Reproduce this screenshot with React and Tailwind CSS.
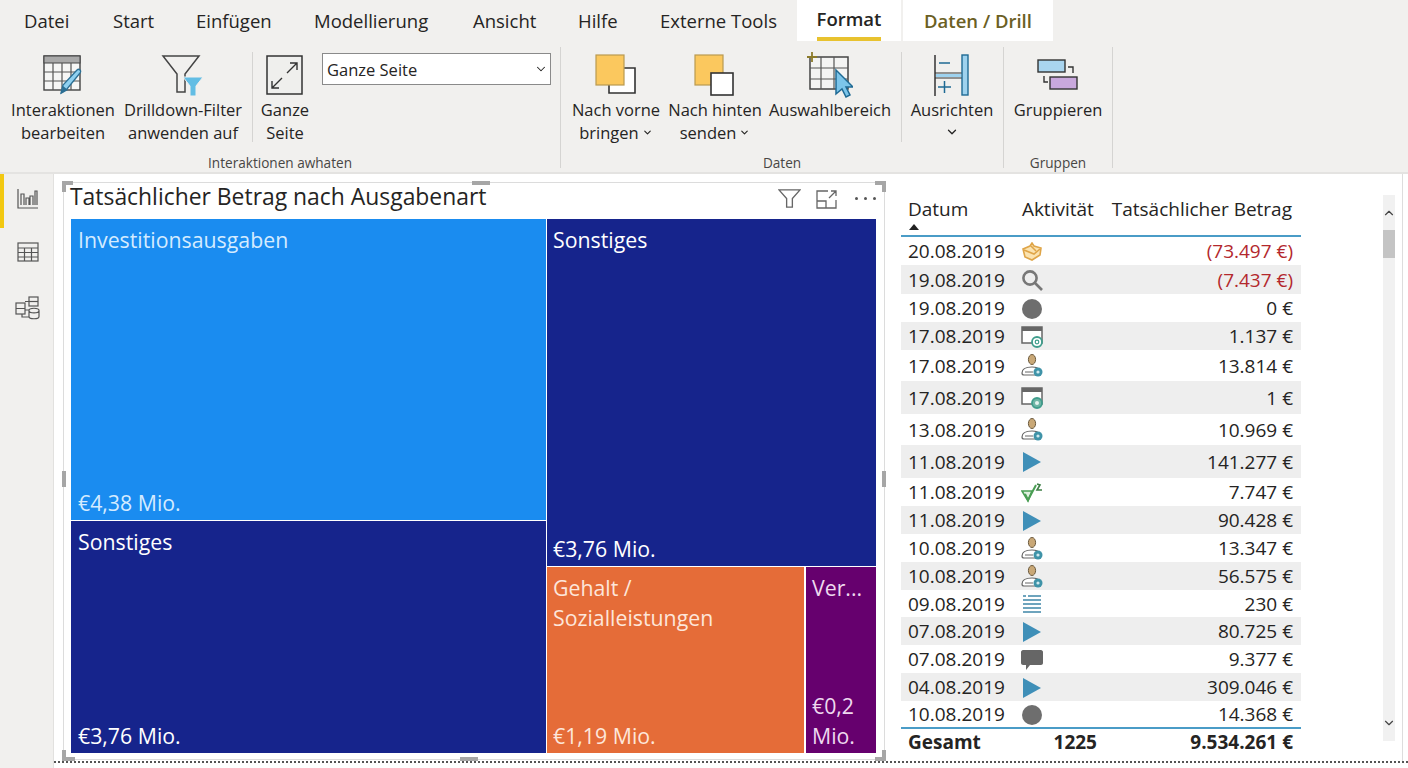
import { ChevronDown, ChevronUp } from "lucide-react";

const tabs = [
  { label: "Datei", cls: "w-[89px]" },
  { label: "Start", cls: "w-[83px]" },
  { label: "Einfügen", cls: "w-[118px]" },
  { label: "Modellierung", cls: "w-[159px]" },
  { label: "Ansicht", cls: "w-[105px]" },
  { label: "Hilfe", cls: "w-[82px]" },
  { label: "Externe Tools", cls: "w-[137px]" },
];

function InteractionIcon() {
  return (
    <svg width="44" height="44" viewBox="0 0 44 44" fill="none">
      <rect x="3" y="3" width="36" height="34" fill="#f6f6f5" stroke="#444" strokeWidth="1.4" />
      <rect x="3" y="3" width="36" height="7" fill="#a9a9a9" stroke="#444" strokeWidth="1" />
      <path d="M3 19h36M3 28h36M12 10v27M21 10v27M30 10v27" stroke="#555" strokeWidth="1.2" />
      <path d="M20 40l2-8 14-15c2-2 5 1 3 3L26 36z" fill="#8fd0f0" stroke="#2c6f94" strokeWidth="1.3" />
      <path d="M20 41l2-8 5 4z" fill="#2c6f94" />
    </svg>
  );
}

function DrillIcon() {
  return (
    <svg width="44" height="42" viewBox="0 0 44 42" fill="none">
      <path d="M2 2h36L24 20v18h-8V20z" fill="#f1f0ee" stroke="#444" strokeWidth="1.5" />
      <path d="M22 23h20l-7 9v10h-6V32z" fill="#62bde4" stroke="#f1f0ee" strokeWidth="1" />
    </svg>
  );
}

function FitIcon() {
  return (
    <svg width="38" height="40" viewBox="0 0 38 40" fill="none">
      <rect x="1" y="1" width="35" height="38" fill="#efefed" stroke="#333" strokeWidth="1.5" />
      <path d="M21 18L31 8M24 8h7v7M16 23L6 33M6 26v7h7" stroke="#333" strokeWidth="1.4" />
    </svg>
  );
}

function ForwardIcon() {
  return (
    <svg width="42" height="42" viewBox="0 0 42 42" fill="none">
      <path d="M27 14h13v25H14V29" fill="#fff" stroke="#333" strokeWidth="1.6" />
      <rect x="1" y="1" width="28" height="30" fill="#fbc85e" stroke="#b99a50" strokeWidth="1.2" />
    </svg>
  );
}

function BackwardIcon() {
  return (
    <svg width="42" height="42" viewBox="0 0 42 42" fill="none">
      <rect x="1" y="1" width="28" height="30" fill="#fbc85e" stroke="#b99a50" strokeWidth="1.2" />
      <rect x="17" y="19" width="22" height="22" fill="#fff" stroke="#333" strokeWidth="1.6" />
    </svg>
  );
}

function SelectionIcon() {
  return (
    <svg width="46" height="46" viewBox="0 0 46 46" fill="none">
      <rect x="3" y="5" width="38" height="32" fill="#f4f4f3" stroke="#444" strokeWidth="1.5" />
      <path d="M3 16h38M3 27h38M14 5v32M27 5v32" stroke="#555" strokeWidth="1.2" />
      <path d="M5 0v10M0 5h10" stroke="#8c7b2a" strokeWidth="1.8" />
      <path d="M29 18v24l6-5 4 8 4-2-4-8h7z" fill="#7cc5ea" stroke="#1f6a94" strokeWidth="1.5" />
    </svg>
  );
}

function AlignIcon() {
  return (
    <svg width="38" height="42" viewBox="0 0 38 42" fill="none">
      <path d="M2 1v41" stroke="#333" strokeWidth="1.5" />
      <path d="M6 9h11M5 33h13M11.5 27v12" stroke="#1f6a94" strokeWidth="1.5" />
      <path d="M2 19h27M2 24h27" stroke="#333" strokeWidth="1.2" />
      <rect x="3" y="20" width="25" height="3" fill="#9ed2ee" />
      <rect x="29" y="1" width="6" height="40" fill="#9ed2ee" stroke="#1f6a94" strokeWidth="1.4" />
    </svg>
  );
}

function GroupIcon() {
  return (
    <svg width="42" height="32" viewBox="0 0 42 32" fill="none">
      <rect x="1" y="1" width="27" height="12" fill="#a9d5ef" stroke="#333" strokeWidth="1.4" />
      <rect x="13" y="18" width="27" height="12" fill="#c9a8dd" stroke="#333" strokeWidth="1.4" />
      <path d="M31 8h5v6M7 17v6h4" stroke="#333" strokeWidth="1.4" />
    </svg>
  );
}

function RibbonButton({ width, icon, children }) {
  return (
    <div className={`flex flex-col items-center shrink-0 ${width}`}>
      <div className="h-[46px] flex items-center justify-center">{icon}</div>
      <div className="text-[16.5px] leading-[23px] text-center text-[#252423] whitespace-nowrap">{children}</div>
    </div>
  );
}

function Ribbon() {
  return (
    <div className="h-[172px] bg-[#f1f0ee]">
      <div className="h-[41px] flex">
        {tabs.map((t) => (
          <div key={t.label} className={`${t.cls} first:ml-[24px] text-[18.5px] leading-[41px] text-[#252423]`}>
            {t.label}
          </div>
        ))}
        <div className="w-[104px] bg-white flex flex-col items-center">
          <div className="text-[18.5px] leading-[37px] h-[37px] font-semibold text-[#252423]">Format</div>
          <div className="w-[64px] h-[4px] bg-[#e8c22f]" />
        </div>
        <div className="ml-[2px] w-[150px] bg-white text-center text-[18.5px] leading-[41px] font-semibold text-[#6b6024]">
          Daten / Drill
        </div>
      </div>

      <div className="flex mt-[6px]">
        <div className="w-[561px] h-[121px] border-r border-[#d5d4d2] pt-[5px] flex-none">
          <div className="flex h-[95px] pl-[8px]">
            <RibbonButton width="w-[110px]" icon={<InteractionIcon />}>
              Interaktionen<br />bearbeiten
            </RibbonButton>
            <RibbonButton width="w-[130px]" icon={<DrillIcon />}>
              Drilldown-Filter<br />anwenden auf
            </RibbonButton>
            <div className="ml-[4px] w-px h-[90px] bg-[#d5d4d2]" />
            <RibbonButton width="w-[64px]" icon={<FitIcon />}>
              Ganze<br />Seite
            </RibbonButton>
            <div className="ml-[5px] mt-[1px] w-[229px] h-[32px] bg-white border border-[#8a8a8a] flex items-center justify-between pl-[4px] pr-[2px] text-[16.5px] text-[#252423]">
              <span className="pt-[2px]">Ganze Seite</span>
              <ChevronDown size={14} strokeWidth={1.8} />
            </div>
          </div>
          <div className="mt-[8px] text-center text-[13.6px] leading-[16px] text-[#484644]">Interaktionen awhaten</div>
        </div>

        <div className="w-[443px] h-[121px] border-r border-[#d5d4d2] pt-[5px] flex-none">
          <div className="flex h-[95px]">
            <RibbonButton width="w-[110px]" icon={<ForwardIcon />}>
              Nach vorne<br />
              <span className="inline-flex items-center gap-[3px]">bringen <ChevronDown size={11} strokeWidth={2.5} /></span>
            </RibbonButton>
            <RibbonButton width="w-[88px]" icon={<BackwardIcon />}>
              Nach hinten<br />
              <span className="inline-flex items-center gap-[3px]">senden <ChevronDown size={11} strokeWidth={2.5} /></span>
            </RibbonButton>
            <RibbonButton width="w-[142px]" icon={<SelectionIcon />}>
              Auswahlbereich
            </RibbonButton>
            <div className="w-px h-[90px] bg-[#d5d4d2]" />
            <RibbonButton width="w-[100px]" icon={<AlignIcon />}>
              Ausrichten<br />
              <span className="inline-flex items-center"><ChevronDown size={14} strokeWidth={2.2} /></span>
            </RibbonButton>
          </div>
          <div className="mt-[8px] text-center text-[13.6px] leading-[16px] text-[#484644]">Daten</div>
        </div>

        <div className="w-[109px] h-[121px] border-r border-[#d5d4d2] pt-[5px] flex-none">
          <div className="flex h-[95px]">
            <RibbonButton width="w-[108px]" icon={<GroupIcon />}>
              Gruppieren
            </RibbonButton>
          </div>
          <div className="mt-[8px] text-center text-[13.6px] leading-[16px] text-[#484644]">Gruppen</div>
        </div>
      </div>
    </div>
  );
}

function Rail() {
  return (
    <div className="w-[54px] flex-none bg-[#f1f0ee] border-r border-[#e2e1df] flex">
      <div className="w-[4px] h-[54px] bg-[#f2c811] flex-none" />
      <div className="flex flex-col items-center w-[48px] pt-[15px]">
        <svg width="22" height="20" viewBox="0 0 22 20" fill="none" stroke="#555" strokeWidth="1.2">
          <path d="M1 0v19h20" />
          <path d="M4 16V5h3v11M9 16V9h3v7M13 16V7h3v9M18 16V2h2v14" />
        </svg>
        <svg className="mt-[33px]" width="22" height="20" viewBox="0 0 22 20" fill="none" stroke="#555" strokeWidth="1.2">
          <rect x="1" y="1" width="20" height="18" />
          <path d="M1 6h20M1 10.5h20M1 15h20M7.5 6v13M14.5 6v13" />
        </svg>
        <svg className="mt-[34px]" width="26" height="24" viewBox="0 0 26 24" fill="none" stroke="#555" strokeWidth="1.2">
          <rect x="14" y="1" width="9" height="9" />
          <path d="M14 5.5h9" />
          <rect x="1" y="7" width="9" height="11" />
          <path d="M1 12.5h9M10 5.5h4M10 14h4M7 18v3h7" />
          <path d="M14 14.5c0-3 10-3 10 0v6c0 3-10 3-10 0zM14 15c1 2.5 9 2.5 10 0" />
        </svg>
      </div>
    </div>
  );
}

function Tile({ bg, label, value, cls, text = "text-white", pad = "pl-[7px]" }) {
  return (
    <div className={`${bg} ${cls} ${text} ${pad} flex flex-col justify-between pt-[6px] pb-[2px] text-[21.3px] leading-[30px]`}>
      <div>{label}</div>
      <div>{value}</div>
    </div>
  );
}

function Handle({ cls }) {
  return <div className={`absolute bg-[#a6a6a6] ${cls}`} />;
}

function Visual() {
  return (
    <div className="relative w-[822px] h-[578px] mt-[8px] ml-[9px] flex-none border border-[#dcdcdc] flex flex-col">
      <Handle cls="left-[-2px] top-[-2px] w-[11px] h-[4px]" />
      <Handle cls="left-[-2px] top-[-2px] w-[4px] h-[11px]" />
      <Handle cls="right-[-2px] top-[-2px] w-[11px] h-[4px]" />
      <Handle cls="right-[-2px] top-[-2px] w-[4px] h-[11px]" />
      <Handle cls="left-[-2px] bottom-[-2px] w-[13px] h-[4px]" />
      <Handle cls="left-[-2px] bottom-[-2px] w-[4px] h-[11px]" />
      <Handle cls="right-[-2px] bottom-[-2px] w-[11px] h-[4px]" />
      <Handle cls="right-[-2px] bottom-[-2px] w-[4px] h-[11px]" />
      <Handle cls="left-[408px] top-[-2px] w-[18px] h-[4px]" />
      <Handle cls="left-[396px] bottom-[-2px] w-[18px] h-[4px]" />
      <Handle cls="left-[-2px] top-[288px] w-[4px] h-[16px]" />
      <Handle cls="right-[-2px] top-[288px] w-[4px] h-[16px]" />

      <div className="h-[36px] flex-none flex items-start justify-between pl-[6px] pr-[8px]">
        <div className="text-[22.9px] leading-[28px] text-[#252423] whitespace-nowrap">Tatsächlicher Betrag nach Ausgabenart</div>
        <div className="flex items-center mt-[5px]">
          <svg width="23" height="21" viewBox="0 0 24 22" fill="none" stroke="#666" strokeWidth="1.4">
            <path d="M1 2h22l-8 9v9H9v-9z" />
          </svg>
          <svg className="ml-[15px]" width="22" height="20" viewBox="0 0 22 20" fill="none" stroke="#666" strokeWidth="1.3">
            <path d="M12 2H1v17h19v-8M1 12h9v7M13 9l7-7M15 2h5v5" />
          </svg>
          <div className="ml-[17px] flex gap-[6px]">
            <div className="w-[3px] h-[3px] rounded-full bg-[#555]" />
            <div className="w-[3px] h-[3px] rounded-full bg-[#555]" />
            <div className="w-[3px] h-[3px] rounded-full bg-[#555]" />
          </div>
        </div>
      </div>

      <div className="ml-[7px] w-[805px] h-[534px] flex gap-px">
        <div className="w-[475px] flex flex-col gap-px">
          <Tile bg="bg-[#1a8cf0]" cls="h-[301px]" label="Investitionsausgaben" value="€4,38 Mio." text="text-[#d4ebff]" />
          <Tile bg="bg-[#16248c]" cls="flex-1" label="Sonstiges" value="€3,76 Mio." />
        </div>
        <div className="flex-1 flex flex-col gap-px">
          <Tile bg="bg-[#16248c]" cls="h-[347px]" pad="pl-[6px]" label="Sonstiges" value="€3,76 Mio." />
          <div className="flex-1 flex gap-[2px]">
            <Tile bg="bg-[#e56c38]" cls="flex-1" pad="pl-[6px]" label={<>Gehalt /<br />Sozialleistungen</>} value="€1,19 Mio." text="text-[#fde6da]" />
            <Tile bg="bg-[#66006e]" cls="w-[70px]" pad="pl-[6px]" label="Ver..." value={<>€0,2<br />Mio.</>} text="text-[#eed9ef]" />
          </div>
        </div>
      </div>
    </div>
  );
}

const Triangle = () => (
  <svg width="20" height="20" viewBox="0 0 20 20"><path d="M1 0l18 10L1 20z" fill="#3f8fb8" /></svg>
);
const Circle = () => (
  <svg width="22" height="22" viewBox="0 0 22 22"><circle cx="11" cy="11" r="10" fill="#6e6e6e" /></svg>
);
const Gift = () => (
  <svg width="22" height="20" viewBox="0 0 22 20" fill="#fbe3b0" stroke="#dfa548" strokeWidth="1.6">
    <path d="M2 7l7-3 2-3 2 3 7 2-1 7-8 5-7-3z" />
    <path d="M3 8l10 4 6-5M10 4l5 5" fill="none" />
  </svg>
);
const Search = () => (
  <svg width="22" height="22" viewBox="0 0 22 22" fill="none" stroke="#777" strokeWidth="2.6">
    <circle cx="9" cy="9" r="6.6" />
    <path d="M14 14l7 7" />
  </svg>
);
const WindowAt = ({ at }) => (
  <svg width="22" height="22" viewBox="0 0 22 22" fill="none">
    <rect x="1" y="1" width="20" height="16" fill="#fff" stroke="#666" strokeWidth="1.5" />
    <rect x="1" y="1" width="20" height="4" fill="#666" />
    <circle cx="16" cy="16" r="5" fill={at ? "#fff" : "#6fb5a5"} stroke="#3f9d8c" strokeWidth="1.8" />
    {at ? <circle cx="16" cy="16" r="1.8" stroke="#3f9d8c" strokeWidth="1.2" /> : <circle cx="16" cy="16" r="2" fill="#e4f3ef" />}
  </svg>
);
const Person = () => (
  <svg width="22" height="24" viewBox="0 0 22 24" fill="none">
    <ellipse cx="11" cy="5.5" rx="3.6" ry="5" fill="#c9a877" stroke="#6b5a3e" strokeWidth="1" />
    <path d="M1 19c0-5 6-6 10-6s7 1 6 4v4H3c-1 0-2 0-2-2z" fill="#fff" stroke="#666" strokeWidth="1.2" />
    <path d="M4 18h8" stroke="#666" strokeWidth="1" />
    <circle cx="17" cy="18" r="4.5" fill="#3f93a8" />
    <circle cx="17" cy="18" r="1.6" fill="#cfeaf0" />
  </svg>
);
const Check = () => (
  <svg width="22" height="20" viewBox="0 0 22 20" fill="none" stroke="#4a9e54" strokeWidth="1.6">
    <path d="M1 8h10l-4 10z" fill="#dff0df" />
    <path d="M4 11l3 6L15 2" strokeWidth="2" />
    <path d="M16 1l3 1-3 5h5" stroke="#3e7f46" />
  </svg>
);
const Lines = () => (
  <svg width="20" height="20" viewBox="0 0 20 20" stroke="#3f86a8" strokeWidth="1.7">
    <path d="M1 2h3M6 2h13M1 6h18M1 10h18M1 14h18M1 18h18" />
  </svg>
);
const Bubble = () => (
  <svg width="22" height="20" viewBox="0 0 22 20">
    <path d="M2 0h18c1 0 2 1 2 2v11c0 1-1 2-2 2H9l-4 5v-5H2c-1 0-2-1-2-2V2c0-1 1-2 2-2z" fill="#666" />
  </svg>
);

const rows = [
  { d: "20.08.2019", icon: <Gift />, v: "(73.497 €)", h: "h-[28px]", neg: true },
  { d: "19.08.2019", icon: <Search />, v: "(7.437 €)", h: "h-[29px]", neg: true },
  { d: "19.08.2019", icon: <Circle />, v: "0 €", h: "h-[28px]" },
  { d: "17.08.2019", icon: <WindowAt at />, v: "1.137 €", h: "h-[28px]" },
  { d: "17.08.2019", icon: <Person />, v: "13.814 €", h: "h-[31px]" },
  { d: "17.08.2019", icon: <WindowAt />, v: "1 €", h: "h-[33px]" },
  { d: "13.08.2019", icon: <Person />, v: "10.969 €", h: "h-[31px]" },
  { d: "11.08.2019", icon: <Triangle />, v: "141.277 €", h: "h-[33px]" },
  { d: "11.08.2019", icon: <Check />, v: "7.747 €", h: "h-[28px]" },
  { d: "11.08.2019", icon: <Triangle />, v: "90.428 €", h: "h-[28px]" },
  { d: "10.08.2019", icon: <Person />, v: "13.347 €", h: "h-[28px]" },
  { d: "10.08.2019", icon: <Person />, v: "56.575 €", h: "h-[28px]" },
  { d: "09.08.2019", icon: <Lines />, v: "230 €", h: "h-[27px]" },
  { d: "07.08.2019", icon: <Triangle />, v: "80.725 €", h: "h-[28px]" },
  { d: "07.08.2019", icon: <Bubble />, v: "9.377 €", h: "h-[28px]" },
  { d: "04.08.2019", icon: <Triangle />, v: "309.046 €", h: "h-[28px]" },
  { d: "10.08.2019", icon: <Circle />, v: "14.368 €", h: "h-[26px]" },
];

function DataTable() {
  return (
    <div className="w-[400px] ml-[16px] mt-[21px] flex-none">
      <div className="h-[42px] border-b-2 border-[#4a9cc7] relative flex text-[19px] leading-[28px] text-[#252423] whitespace-nowrap">
        <div className="w-[121px] pl-[7px]">Datum</div>
        <div className="w-[90px]">Aktivität</div>
        <div className="flex-1 text-right pr-[9px]">Tatsächlicher Betrag</div>
        <div className="absolute left-[8px] top-[29px] w-0 h-0 border-x-[5px] border-x-transparent border-b-[6px] border-b-[#222]" />
      </div>
      {rows.map((r, i) => (
        <div
          key={i}
          className={`${r.h} ${i % 2 === 1 ? "bg-[#eeeeee]" : "bg-white"} pt-[1px] flex items-center text-[19px] text-[#252423] whitespace-nowrap`}
        >
          <div className="w-[119px] pl-[7px]">{r.d}</div>
          <div className="w-[24px] flex justify-center">{r.icon}</div>
          <div className={`flex-1 text-right pr-[8px] ${r.neg ? "text-[#b3282d]" : ""}`}>{r.v}</div>
        </div>
      ))}
      <div className="h-[29px] border-t-2 border-[#4a9cc7] flex items-center text-[19px] font-bold text-[#252423] whitespace-nowrap">
        <div className="w-[121px] pl-[7px]">Gesamt</div>
        <div className="w-[75px] text-right">1225</div>
        <div className="flex-1 text-right pr-[8px]">9.534.261 €</div>
      </div>
    </div>
  );
}

function Scrollbar() {
  return (
    <div className="w-[12px] h-[546px] mt-[21px] ml-[82px] flex-none bg-[#f1f1f1] flex flex-col items-center justify-between text-[#444]">
      <div className="w-full flex flex-col items-center">
        <ChevronUp className="mt-[11px]" size={14} strokeWidth={2} />
        <div className="w-full h-[28px] mt-[10px] bg-[#c4c4c4]" />
      </div>
      <ChevronDown className="mb-[11px]" size={14} strokeWidth={2} />
    </div>
  );
}

export default function App() {
  return (
    <div className="w-[1408px] h-[768px] overflow-hidden bg-white flex flex-col font-['Open_Sans',sans-serif]">
      <Ribbon />
      <div className="h-[2px] bg-[#e4e3e1] flex-none" />
      <div className="flex-1 flex min-h-0">
        <Rail />
        <div className="flex-1 h-[589px] flex border-b-2 border-dotted border-[#555] border-r-0">
          <Visual />
          <DataTable />
          <Scrollbar />
          <div className="ml-[7px] w-px h-full bg-[#dddddd]" />
        </div>
      </div>
    </div>
  );
}
